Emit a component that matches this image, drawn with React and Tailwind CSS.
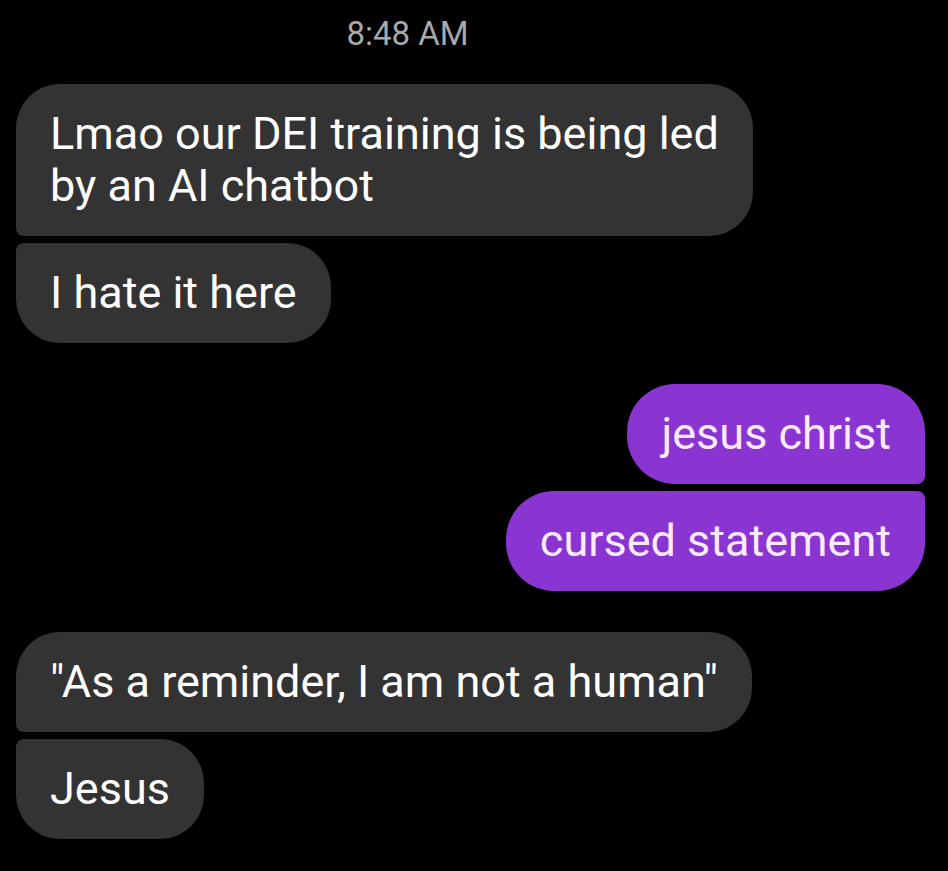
import React from "react";

const MESSAGES = [
  { side: "in", group: [["Lmao our DEI training is being led", "by an AI chatbot"], ["I hate it here"]] },
  { side: "out", group: [["jesus christ"], ["cursed statement"]] },
  { side: "in", group: [["\"As a reminder, I am not a human\""], ["Jesus"]] },
];

// corner shapes for first / last bubble in a run
const SHAPES = {
  in: ["rounded-[44px] rounded-bl-[8px]", "rounded-[44px] rounded-tl-[8px]"],
  out: ["rounded-[48px] rounded-br-[8px]", "rounded-[48px] rounded-tr-[8px]"],
};

const Bubble = ({ lines, side, shape }) => (
  <div
    className={`px-[34px] py-6 text-[45px] leading-[52px] ${shape} ${
      side === "in" ? "bg-[#333333] text-white" : "bg-[#8a35d2] text-[#fdeaff]"
    }`}
  >
    {lines.map((l, i) => (
      <div key={i} className="whitespace-nowrap">{l}</div>
    ))}
  </div>
);

export default function App() {
  return (
    <div
      className="w-[948px] h-[871px] bg-black overflow-hidden flex flex-col"
      style={{ fontFamily: "Roboto, 'Noto Sans', sans-serif" }}
    >
      {/* timestamp */}
      <div className="flex justify-center pr-[133px] pt-[14px] text-[33px] leading-[40px] text-[#a9a9ab]">
        8:48 AM
      </div>

      {/* conversation */}
      <div className="flex flex-col gap-[41px] mt-[30px]">
        {MESSAGES.map((m, gi) => (
          <div
            key={gi}
            className={`flex flex-col gap-[7px] ${m.side === "in" ? "items-start pl-[16px]" : "items-end pr-[23px]"}`}
          >
            {m.group.map((lines, i) => (
              <Bubble key={i} lines={lines} side={m.side} shape={SHAPES[m.side][i]} />
            ))}
          </div>
        ))}
      </div>
    </div>
  );
}
